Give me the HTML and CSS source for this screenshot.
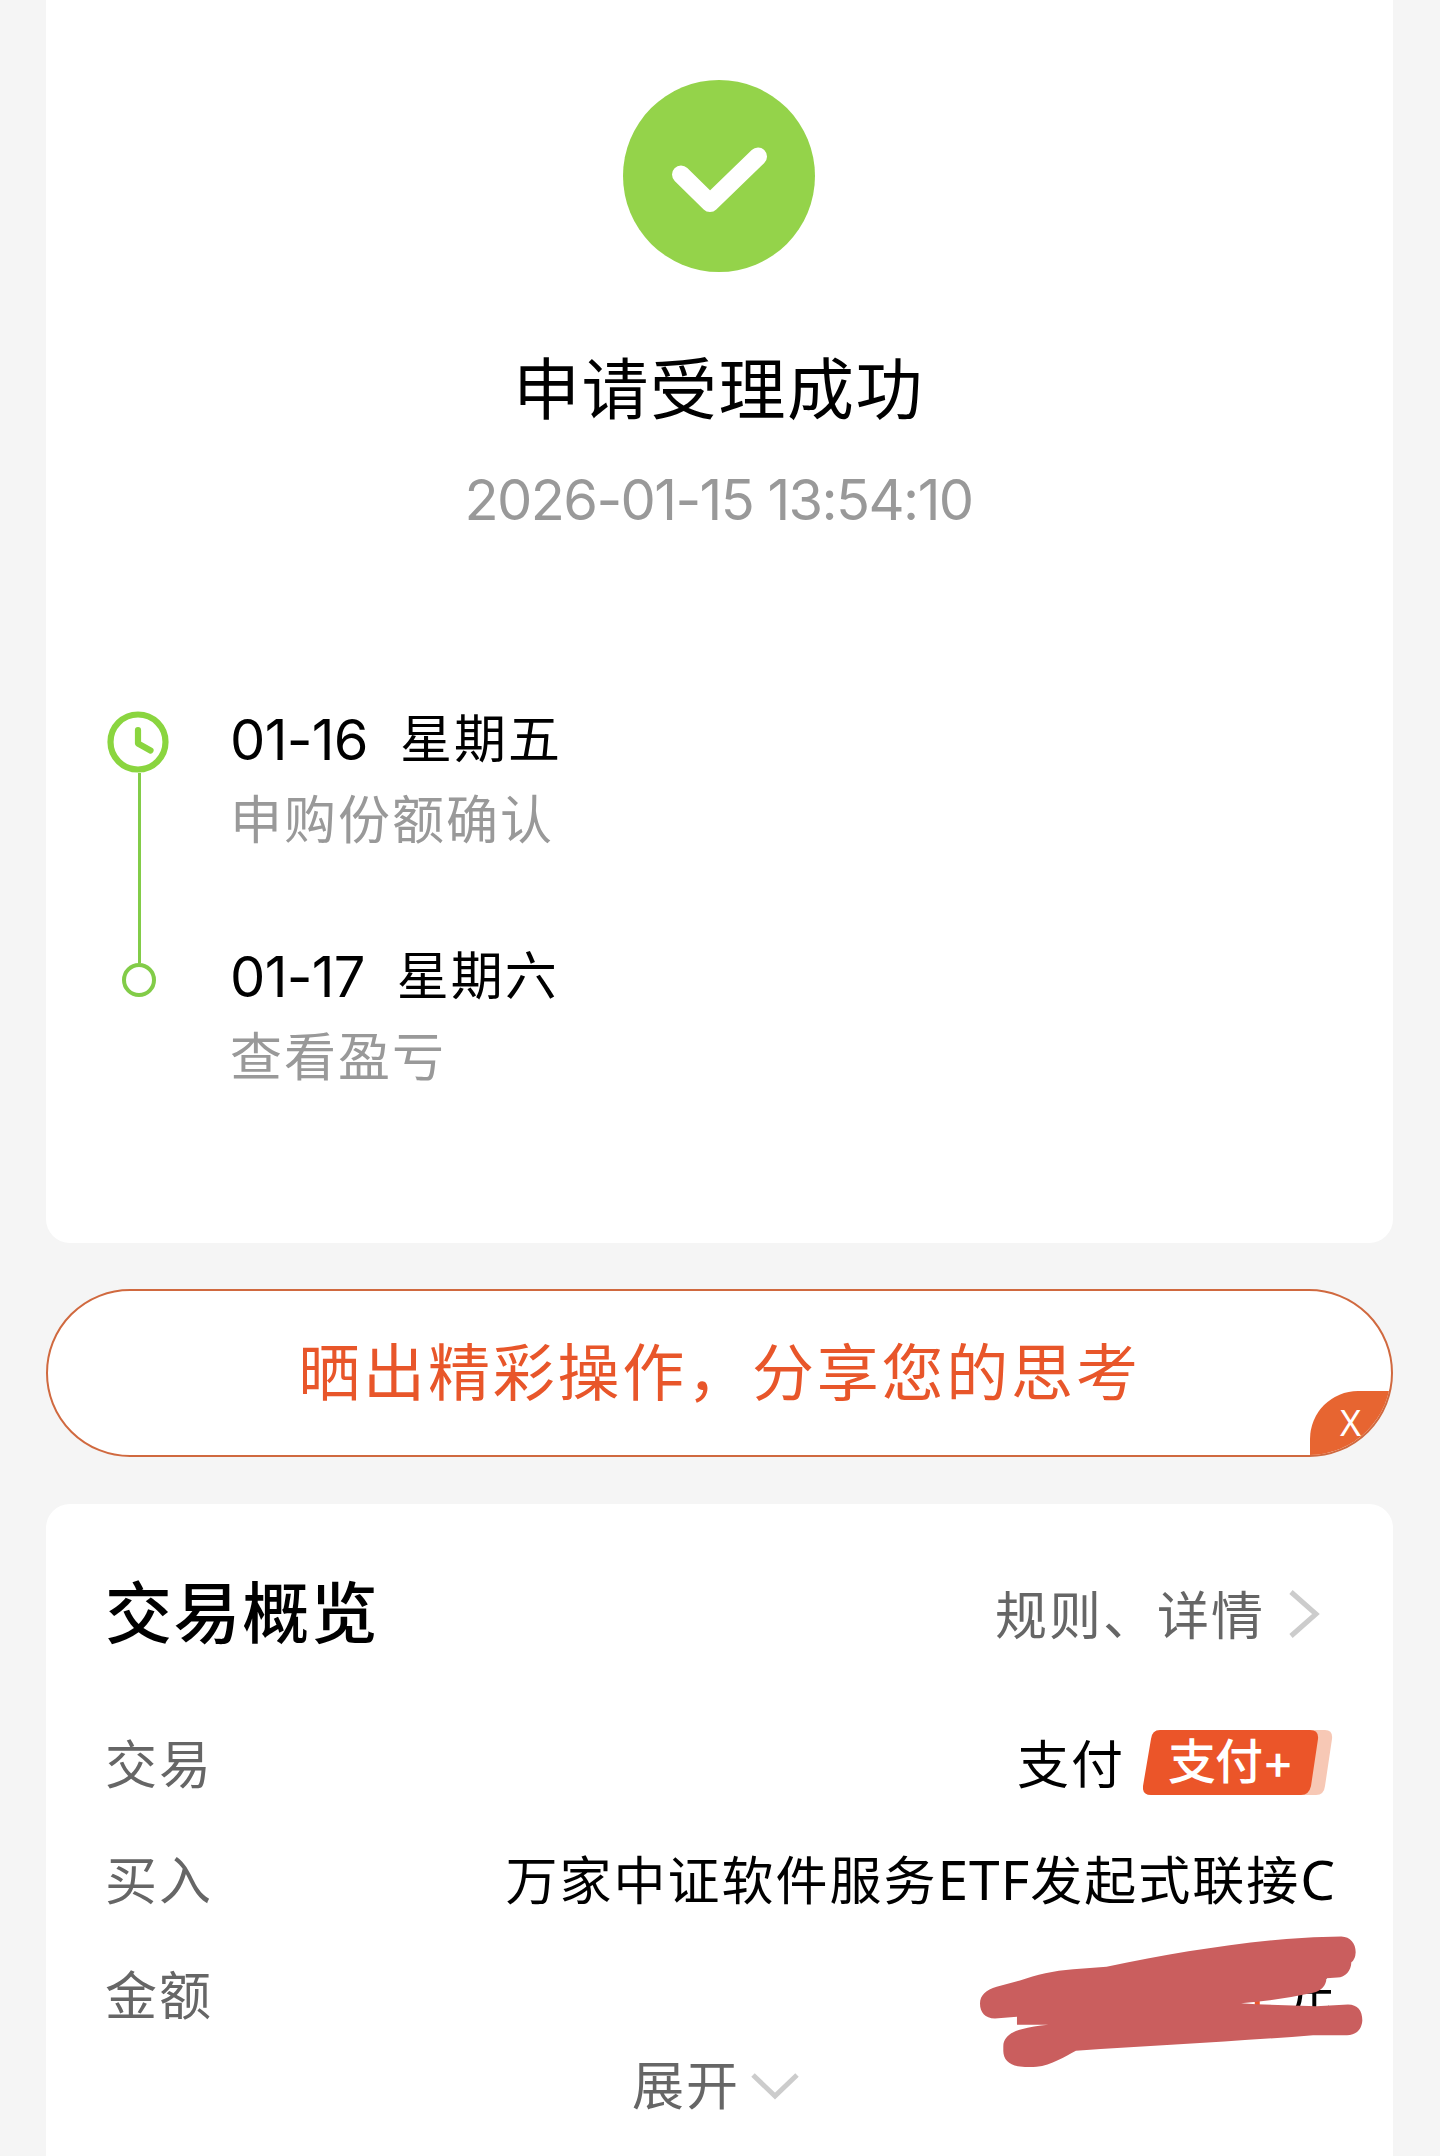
FILE: index.html
```html
<!DOCTYPE html>
<html lang="zh-CN">
<head>
  <meta charset="UTF-8">
  <meta name="viewport" content="width=device-width, initial-scale=1.0">
  <title>申请受理成功</title>
  <link rel="stylesheet" href="styles.css">
</head>
<body>
  <section class="card result">
    <svg class="success-icon" viewBox="0 0 192 192">
      <circle cx="96" cy="96" r="96" fill="#94d34a"/>
      <path d="M58 94.500L87 123L135 76.500" fill="none" stroke="#fff" stroke-width="18" stroke-linecap="round" stroke-linejoin="round"/>
    </svg>
    <h1>申请受理成功</h1>
    <p class="time">2026-01-15 13:54:10</p>

    <div class="timeline">
      <div class="track">
        <svg class="clock" viewBox="0 0 62 62">
          <circle cx="31" cy="31" r="27.500" fill="none" stroke="#8ad53f" stroke-width="6.200"/>
          <path d="M31 19V32.500L43.500 39.500" fill="none" stroke="#8ad53f" stroke-width="6.200" stroke-linecap="round" stroke-linejoin="round"/>
        </svg>
        <div class="line"></div>
        <div class="dot"></div>
      </div>
      <div class="steps">
        <div class="step">
          <p class="date"><span class="num">01-16</span><span>星期五</span></p>
          <p class="desc">申购份额确认</p>
        </div>
        <div class="step">
          <p class="date"><span class="num">01-17</span><span>星期六</span></p>
          <p class="desc">查看盈亏</p>
        </div>
      </div>
    </div>
  </section>

  <div class="share">
    <span>晒出精彩操作，分享您的思考</span>
    <div class="close">X</div>
  </div>

  <section class="card overview">
    <div class="overview-head">
      <h2>交易概览</h2>
      <div class="more">
        <span>规则、详情</span>
        <svg class="arrow-right" viewBox="0 0 32 50"><path d="M3 3L28 25L3 47" fill="none" stroke="#ccc" stroke-width="5"/></svg>
      </div>
    </div>
    <div class="row">
      <span class="label">交易</span>
      <div class="value pay">
        <span>支付</span>
        <div class="badge">
          <svg class="badge-bg" viewBox="0 0 190 65">
            <path d="M160 0H182Q190 0 189 9L182 56Q181 65 173 65H150Z" fill="#f7c8b5"/>
            <path d="M17 0H167Q176 0 175 9L168 56Q166 65 158 65H8Q-1 65 0 56L8 9Q9 0 17 0Z" fill="#eb5529"/>
          </svg>
          <span>支付+</span>
        </div>
      </div>
    </div>
    <div class="row">
      <span class="label">买入</span>
      <span class="value fund">万家中证软件服务<span class="latin">ETF</span>发起式联接<span class="latin">C</span></span>
    </div>
    <div class="row">
      <span class="label">金额</span>
      <div class="value amount">
        <span>元</span>
        <svg class="mask" viewBox="120 110 1150 395">
          <path d="M945 295H960V330H945Z" fill="#eb5529"/>
          <path d="M170 262L240 243C290 226 340 213 400 209L500 202C680 164 850 135 1040 118Q1120 112 1205 111C1232 112 1248 132 1248 158Q1247 180 1235 188C1234 214 1218 233 1193 234L1160 236C1160 258 1145 273 1120 280Q1020 302 904 311Q1010 318 1130 320L1225 315C1254 316 1268 333 1268 363C1266 390 1250 407 1222 407L1120 407C900 425 650 437 408 454C375 471 335 498 290 502Q265 504 240 501C208 499 190 480 190 455V440C190 414 214 396 245 389Q280 380 325 376H231V352L165 357C135 357 120 338 120 312C120 288 138 271 170 262Z" fill="#ca5e5e"/>
        </svg>
      </div>
    </div>
    <div class="expand">
      <span>展开</span>
      <svg class="arrow-down" viewBox="0 0 48 28"><path d="M2 3L24 24L46 3" fill="none" stroke="#ccc" stroke-width="5"/></svg>
    </div>
  </section>
</body>
</html>
```
FILE: styles.css
```css
* { box-sizing: border-box; }
body {
  margin: 0;
  padding: 0 47px 0 46px;
  height: 2156px;
  overflow: hidden;
  background: #f5f5f5;
  color: #000;
  font-family: Inter, "Noto Sans CJK SC", sans-serif;
  font-size: 52px;
  letter-spacing: 2px;
}
h1, h2, p { margin: 0; }
svg { display: block; flex-shrink: 0; }
.card { background: #fff; border-radius: 24px; }

/* result */
.result {
  height: 1243px;
  padding: 80px 62px 0 60px;
  border-radius: 0 0 24px 24px;
}
.success-icon { width: 192px; height: 192px; margin: 0 auto; }
h1 {
  margin-top: 78px;
  text-align: center;
  font-size: 67px;
  line-height: 80px;
  font-weight: 400;
  letter-spacing: 1.5px;
}
.time {
  margin-top: 38px;
  text-align: center;
  color: #999;
  font-size: 56px;
  line-height: 64px;
  letter-spacing: -1.6px;
}

/* timeline */
.timeline { display: flex; margin-top: 179px; }
.track { display: flex; flex-direction: column; align-items: center; width: 66px; }
.clock { width: 62px; height: 62px; margin-left: -3px; }
.line { width: 3px; height: 190px; background: #82cc48; }
.dot { width: 34px; height: 34px; border: 4px solid #82cc48; border-radius: 50%; }
.steps { margin-left: 58px; }
.step { height: 238px; }
.date { display: flex; gap: 32px; line-height: 60px; margin-top: -1px; }
.num { font-size: 56px; letter-spacing: -0.7px; }
.desc { margin-top: 21px; line-height: 60px; color: #999; }

/* share button */
.share {
  position: relative;
  height: 168px;
  margin: 46px 0 47px;
  border: 2px solid #d0693f;
  border-radius: 84px;
  background: #fff;
  color: #e8562a;
  font-size: 62px;
  line-height: 165px;
  letter-spacing: 2.8px;
  text-align: center;
  overflow: hidden;
}
.close {
  position: absolute;
  right: 0;
  bottom: 0;
  width: 81px;
  height: 64px;
  border-top-left-radius: 48px;
  background: #e76531;
  color: #fff;
  font-family: "Noto Sans", sans-serif;
  font-size: 36px;
  line-height: 64px;
  letter-spacing: 0;
}

/* overview */
.overview { height: 700px; padding: 70px 57px 0 59px; }
.overview-head { display: flex; justify-content: space-between; align-items: center; height: 80px; }
h2 { font-size: 67px; line-height: 84px; font-weight: 500; letter-spacing: 1.6px; }
.more { display: flex; align-items: center; gap: 23px; padding-right: 16px; color: #666; }
.more span { margin-top: -4px; }
.arrow-right { width: 32px; height: 50px; }
.row { display: flex; justify-content: space-between; align-items: center; height: 115.5px; }
.overview-head + .row { margin-top: 50px; }
.label { color: #666; }
.pay { display: flex; align-items: center; gap: 18px; }
.badge { position: relative; width: 190px; height: 65px; margin: 2px 3px 0 0; }
.badge-bg { position: absolute; left: 0; top: 0; width: 190px; height: 65px; }
.badge span {
  position: relative;
  display: block;
  padding-left: 25px;
  color: #fff;
  font-size: 48px;
  font-weight: 500;
  line-height: 64px;
  letter-spacing: -1px;
}
.latin { font-family: "Noto Sans", sans-serif; font-size: 55px; line-height: 1; letter-spacing: 1px; }
.amount { position: relative; }
.mask { position: absolute; right: -27px; top: -19px; width: 383px; height: 132px; }
.expand { display: flex; justify-content: center; align-items: center; gap: 11px; height: 64px; padding-right: 10px; color: #666; }
.arrow-down { width: 48px; height: 28px; margin-top: 6px; }
```
